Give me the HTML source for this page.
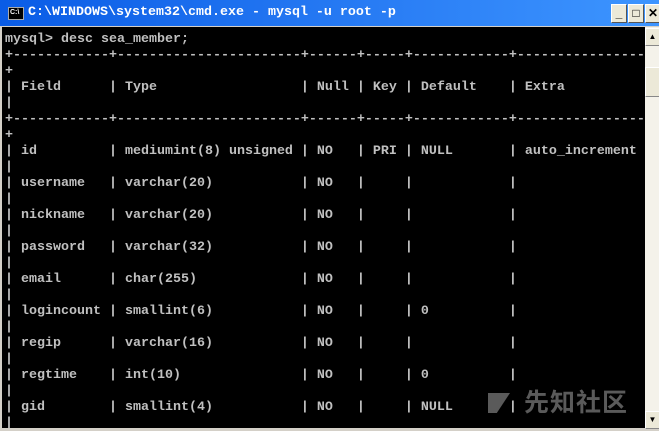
<!DOCTYPE html><html><head><meta charset="utf-8"><style>
body{margin:0;width:659px;height:431px;overflow:hidden;background:#d4d0c8;position:relative;font-family:"Liberation Mono",monospace}
#tb{position:absolute;left:0;top:0;width:659px;height:26px;background:linear-gradient(90deg,#0a5ce6,#2a7ef5 60%,#3d95ff)}
#tt{position:absolute;left:28px;top:5px;color:#fff;font:bold 13.33px "Liberation Mono",monospace;white-space:pre}
.ic{position:absolute;left:8px;top:7px;width:14px;height:11px;background:#000;border:1px solid #aaa;color:#fff;font:bold 7px "Liberation Sans";line-height:10px;text-indent:1px}
.b{position:absolute;top:4px;width:14px;height:17px;background:#ece9d8;border:1px solid #fff;border-right-color:#555;border-bottom-color:#555;font:bold 12px "Liberation Sans";text-align:center;line-height:17px}
#con{position:absolute;left:2px;top:27px;width:643px;height:401px;background:#000;overflow:hidden}
pre{margin:0;position:absolute;left:3px;top:5px;color:#c0c0c0;font:bold 13.33px/16px "Liberation Mono",monospace}
#sb{position:absolute;left:645px;top:27px;width:14px;height:401px;background:#f4f2ea}
.sbb{position:absolute;left:0;width:13px;height:16px;background:#ece9d8;border:1px solid #fff;border-right-color:#888;border-bottom-color:#888;font:8px "Liberation Sans";text-align:center;line-height:16px}
#wm{position:absolute;left:486px;top:356px;color:#5a5a5a;font:bold 25px "Noto Sans CJK SC",sans-serif;letter-spacing:1px}
</style></head><body>
<div id="tb"><div class="ic">C:\</div><div id="tt">C:\WINDOWS\system32\cmd.exe - mysql -u root -p</div>
<div class="b" style="left:611px">_</div><div class="b" style="left:628px">□</div><div class="b" style="left:645px">✕</div></div>
<div id="con"><pre>mysql&gt; desc sea_member;
+------------+-----------------------+------+-----+------------+----------------
+
| Field      | Type                  | Null | Key | Default    | Extra
|
+------------+-----------------------+------+-----+------------+----------------
+
| id         | mediumint(8) unsigned | NO   | PRI | NULL       | auto_increment
|
| username   | varchar(20)           | NO   |     |            |
|
| nickname   | varchar(20)           | NO   |     |            |
|
| password   | varchar(32)           | NO   |     |            |
|
| email      | char(255)             | NO   |     |            |
|
| logincount | smallint(6)           | NO   |     | 0          |
|
| regip      | varchar(16)           | NO   |     |            |
|
| regtime    | int(10)               | NO   |     | 0          |
|
| gid        | smallint(4)           | NO   |     | NULL       |
|</pre>
<div id="wm"><span style="display:inline-block;width:22px;height:20px;background:#5a5a5a;clip-path:polygon(0 0,100% 0,40% 100%,0 100%);vertical-align:-2px;margin-right:14px"></span>先知社区</div></div>
<div id="sb"><div class="sbb" style="top:1px">▲</div><div class="sbb" style="top:40px;height:28px"></div><div class="sbb" style="top:384px">▼</div></div>
</body></html>
